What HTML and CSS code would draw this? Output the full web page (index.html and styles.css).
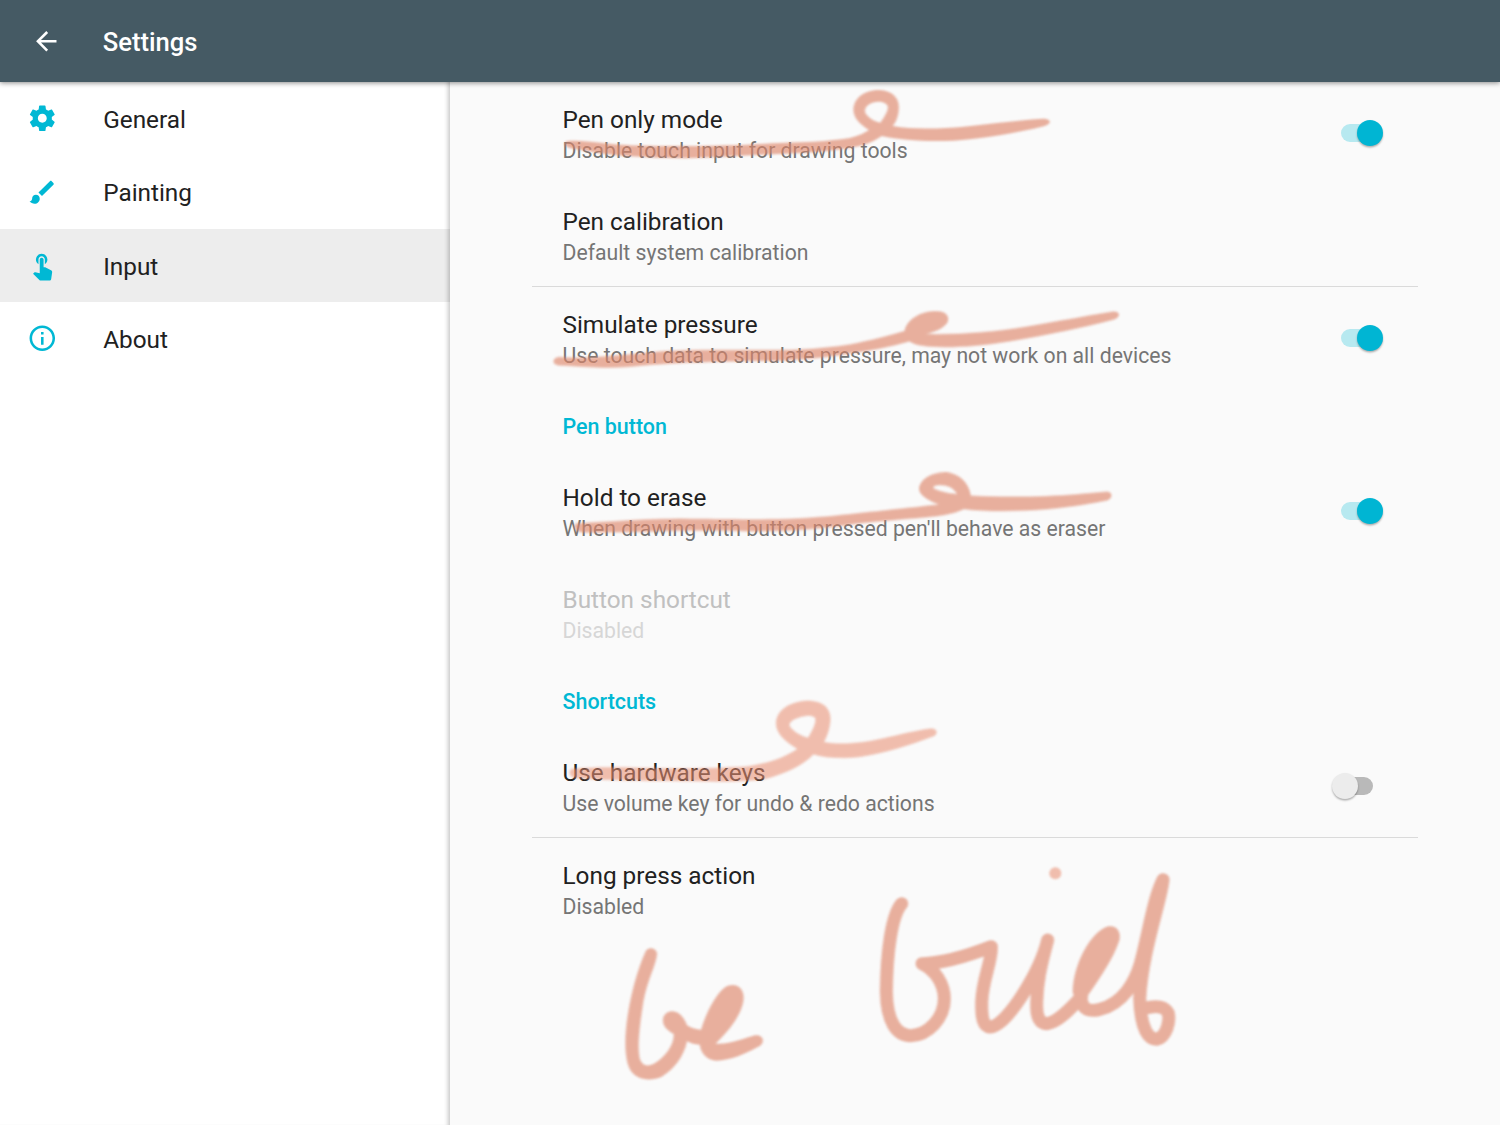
FILE: index.html
```html
<!DOCTYPE html>
<html lang="en">
<head>
<meta charset="utf-8">
<title>Settings</title>
<link rel="stylesheet" href="styles.css">
</head>
<body>
<div class="app">
  <header class="toolbar">
    <svg class="icon" viewBox="0 0 24 24"><path d="M20 11H7.83l5.59-5.59L12 4l-8 8 8 8 1.41-1.41L7.83 13H20v-2z"/></svg>
    <h1 class="toolbar-title">Settings</h1>
  </header>
  <div class="panes">
    <nav class="sidebar">
      <a class="nav-item">
        <svg class="icon" viewBox="0 0 24 24"><path d="M19.43 12.98c.04-.32.07-.64.07-.98s-.03-.66-.07-.98l2.11-1.65c.19-.15.24-.42.12-.64l-2-3.46c-.12-.22-.39-.3-.61-.22l-2.49 1c-.52-.4-1.08-.73-1.69-.98l-.38-2.65C14.46 2.18 14.25 2 14 2h-4c-.25 0-.46.18-.49.42l-.38 2.65c-.61.25-1.17.59-1.69.98l-2.49-1c-.23-.09-.49 0-.61.22l-2 3.46c-.13.22-.07.49.12.64l2.11 1.65c-.04.32-.07.65-.07.98s.03.66.07.98l-2.11 1.65c-.19.15-.24.42-.12.64l2 3.46c.12.22.39.3.61.22l2.49-1c.52.4 1.08.73 1.69.98l.38 2.65c.03.24.24.42.49.42h4c.25 0 .46-.18.49-.42l.38-2.65c.61-.25 1.17-.59 1.69-.98l2.49 1c.23.09.49 0 .61-.22l2-3.46c.12-.22.07-.49-.12-.64l-2.11-1.65zM12 15.5c-1.93 0-3.5-1.57-3.5-3.5s1.57-3.5 3.5-3.5 3.5 1.57 3.5 3.5-1.57 3.5-3.5 3.5z"/></svg>
        <span>General</span>
      </a>
      <a class="nav-item">
        <svg class="icon" viewBox="0 0 24 24"><path d="M7 14c-1.66 0-3 1.34-3 3 0 1.31-1.16 2-2 2 .92 1.22 2.49 2 4 2 2.21 0 4-1.79 4-4 0-1.66-1.34-3-3-3zm13.71-9.37l-1.34-1.34c-.39-.39-1.02-.39-1.41 0L9 12.25 11.75 15l8.96-8.96c.39-.39.39-1.02 0-1.41z"/></svg>
        <span>Painting</span>
      </a>
      <a class="nav-item nav-item-active">
        <svg class="icon" viewBox="0 0 24 24"><path d="M9 11.24V7.5C9 6.12 10.12 5 11.5 5S14 6.12 14 7.5v3.74c1.21-.81 2-2.18 2-3.74C16 5.01 13.99 3 11.5 3S7 5.01 7 7.5c0 1.56.79 2.93 2 3.74zm9.84 4.63l-4.54-2.26c-.17-.07-.35-.11-.54-.11H13v-6c0-.83-.67-1.5-1.5-1.5S10 6.67 10 7.5v10.74l-3.43-.72c-.08-.01-.15-.03-.24-.03-.31 0-.59.13-.79.33l-.79.8 4.94 4.94c.27.27.65.44 1.06.44h6.79c.75 0 1.33-.55 1.44-1.28l.75-5.27c.01-.07.02-.13.02-.2 0-.62-.38-1.16-.91-1.38z"/></svg>
        <span>Input</span>
      </a>
      <a class="nav-item">
        <svg class="icon" viewBox="0 0 24 24"><path d="M11 17h2v-6h-2v6zm1-15C6.48 2 2 6.48 2 12s4.48 10 10 10 10-4.48 10-10S17.52 2 12 2zm0 18c-4.41 0-8-3.59-8-8s3.59-8 8-8 8 3.59 8 8-3.59 8-8 8zM11 9h2V7h-2v2z"/></svg>
        <span>About</span>
      </a>
    </nav>
    <main class="content">
      <div class="pref">
        <div class="pref-text">
          <div class="pref-title">Pen only mode</div>
          <div class="pref-summary">Disable touch input for drawing tools</div>
        </div>
        <div class="switch switch-on"><span class="thumb"></span></div>
      </div>
      <div class="pref">
        <div class="pref-text">
          <div class="pref-title">Pen calibration</div>
          <div class="pref-summary">Default system calibration</div>
        </div>
      </div>
      <div class="pref divided">
        <div class="pref-text">
          <div class="pref-title">Simulate pressure</div>
          <div class="pref-summary">Use touch data to simulate pressure, may not work on all devices</div>
        </div>
        <div class="switch switch-on"><span class="thumb"></span></div>
      </div>
      <h2 class="category">Pen button</h2>
      <div class="pref">
        <div class="pref-text">
          <div class="pref-title">Hold to erase</div>
          <div class="pref-summary">When drawing with button pressed pen'll behave as eraser</div>
        </div>
        <div class="switch switch-on"><span class="thumb"></span></div>
      </div>
      <div class="pref pref-disabled">
        <div class="pref-text">
          <div class="pref-title">Button shortcut</div>
          <div class="pref-summary">Disabled</div>
        </div>
      </div>
      <h2 class="category">Shortcuts</h2>
      <div class="pref">
        <div class="pref-text">
          <div class="pref-title">Use hardware keys</div>
          <div class="pref-summary">Use volume key for undo &amp; redo actions</div>
        </div>
        <div class="switch"><span class="thumb"></span></div>
      </div>
      <div class="pref divided">
        <div class="pref-text">
          <div class="pref-title">Long press action</div>
          <div class="pref-summary">Disabled</div>
        </div>
      </div>
    </main>
  </div>
  <!-- Freehand brush marks over the page -->
  <svg class="ink" viewBox="0 0 1500 1125">
    <g class="brush">
      <path transform="translate(540 80) scale(.3444 .3333)" d="M80 183C110 180 140 184 174 188C230 195 280 197 319 197C370 199 416 198 450 198C500 197 550 196 590 195C650 191 700 189 755 187C810 185 860 180 900 174C925 167 940 160 955 150C925 130 908 110 910 85C914 50 945 30 985 30C1025 32 1043 55 1042 85C1040 110 1035 125 1024 138C1090 150 1170 145 1230 140C1320 130 1400 120 1460 116C1486 116 1486 132 1465 138C1380 160 1290 175 1200 182C1120 186 1050 180 992 168C965 187 940 197 900 204C850 212 800 217 755 219C700 222 650 224 610 226C560 229 510 232 465 233C410 236 360 235 319 232C260 230 215 226 174 220C140 214 110 208 90 205C70 200 66 188 80 183ZM988 128C1000 110 1010 95 1010 80C1006 66 985 62 965 68C945 75 938 92 948 104C958 116 970 124 988 128Z"/>
      <path transform="translate(540 300) scale(.4082 .3333)" d="M45 171C80 174 110 173 147 170C190 167 230 160 269 157C310 152 350 151 392 150C430 149 480 150 514 150C560 150 600 150 637 148C680 145 720 140 759 133C810 122 855 107 893 93C898 60 930 36 965 33C995 30 1005 50 998 68C988 85 970 95 945 102C1030 104 1110 96 1190 80C1270 64 1340 46 1405 34C1423 35 1423 52 1405 59C1320 86 1240 106 1150 124C1080 138 1010 144 960 140C930 138 915 132 905 124C860 140 810 152 759 160C720 168 680 175 637 178C590 183 550 183 514 183C470 185 430 186 392 187C350 188 310 191 269 195C230 200 190 204 155 203C120 202 80 197 45 196C28 192 30 175 45 171Z"/>
      <path transform="translate(540 465) scale(.3827 .3333)" d="M95 175C130 172 170 170 200 168C280 163 330 161 374 161C480 163 549 163 620 162C700 160 750 154 810 147C900 136 1000 124 1042 118C1000 100 985 80 992 62C1000 35 1030 22 1062 22C1095 26 1120 50 1126 92C1230 98 1330 94 1400 88L1482 80C1498 82 1496 100 1483 106C1400 126 1310 138 1210 138C1170 138 1135 136 1108 132C1080 148 1040 154 980 160C900 167 850 173 810 179C720 195 620 200 549 199C480 197 430 196 374 197C300 199 220 203 120 203C95 204 82 186 95 175ZM1090 87C1080 68 1065 60 1045 60C1030 60 1024 66 1030 71C1045 80 1068 85 1090 87Z"/>
      <path transform="translate(600 930) scale(.3333)" d="M136 66C142 48 172 52 171 74C166 110 142 150 130 215C120 280 112 340 118 380C124 412 150 414 178 390C205 368 222 340 221 312C200 300 184 285 190 262C200 238 232 238 248 262C254 270 258 278 261 286C275 296 290 298 303 299C318 250 345 195 375 172C400 156 432 168 431 205C428 250 390 300 347 341C390 344 430 325 465 316C492 312 498 342 472 352C440 370 390 392 350 392C320 390 303 370 299 344C285 344 272 340 261 334C252 380 220 420 185 440C150 456 105 450 88 415C72 380 74 310 84 250C96 180 112 120 136 66Z"/>
      <g transform="translate(860 855) scale(.3333)">
        <path class="line" d="M125 146C95 180 80 290 79 410C80 500 110 542 152 542C205 540 253 490 253 430C252 385 225 345 186 326C250 325 330 300 394 275C396 320 368 370 365 440C364 490 370 515 390 516C440 515 540 350 563 255C540 340 532 380 530 440C528 490 540 506 562 506C600 500 640 450 665 425"/>
        <path d="M638 410C640 330 690 230 745 214C780 210 785 245 775 265C760 310 720 370 682 424L650 460Z"/>
        <path class="line" d="M662 420C665 470 690 470 720 463C790 445 825 380 840 330C865 240 880 130 909 74C905 130 846 290 839 430C842 510 860 553 890 553C920 545 930 500 925 475C915 455 890 450 855 460"/>
      </g>
    </g>
    <g class="brush brush-light">
      <path transform="translate(540 685) scale(.3333)" d="M95 252C150 246 220 246 290 248C400 252 520 250 620 244C680 236 730 220 772 192C735 170 705 145 708 110C714 70 755 47 810 47C855 50 875 75 871 110C868 135 862 152 852 171C910 182 980 172 1050 155C1100 143 1140 134 1175 130C1195 132 1195 150 1175 156C1110 180 1040 204 960 216C900 222 855 218 820 208C790 240 740 265 670 283C600 292 500 290 400 288C300 288 180 284 110 280C85 276 85 258 95 252ZM804 158C818 135 828 115 826 100C820 88 795 90 770 100C748 108 742 120 756 132C770 146 786 154 804 158Z"/>
      <circle cx="1055.3" cy="873.2" r="6"/>
    </g>
  </svg>
</div>
</body>
</html>
```
FILE: styles.css
```css
* { box-sizing: border-box; }

body {
  margin: 0;
  font-family: Roboto, "Noto Sans", sans-serif;
  font-size: 24.33px;
  color: #212121;
  background: #fafafa;
}

.app {
  position: relative;
  display: flex;
  flex-direction: column;
  width: 1500px;
  height: 1125px;
  overflow: hidden;
}

.icon {
  width: 30.6px;
  height: 30.6px;
  flex: none;
  fill: currentColor;
}

.toolbar {
  z-index: 2;
  display: flex;
  align-items: center;
  gap: 41.4px;
  height: 82px;
  flex: none;
  padding-left: 30.8px;
  color: #fff;
  background: #455a64;
  box-shadow: 0 1px 5px rgba(0, 0, 0, .45);
}

.toolbar-title {
  margin: 1px 0 0;
  font-size: 25.6px;
  font-weight: 500;
}

.panes {
  display: flex;
  flex: 1;
  min-height: 0;
}

.sidebar {
  width: 450px;
  flex: none;
  background: #fff;
  box-shadow: inset -5px 0 4px -3px rgba(0, 0, 0, .22);
}

.nav-item {
  display: flex;
  align-items: center;
  gap: 46px;
  height: 73.35px;
  padding-left: 26.6px;
}

.nav-item .icon { color: #00b8d4; }

.nav-item span { padding-top: 1.5px; }

.nav-item-active {
  background: rgba(0, 0, 0, .07);
}

.content {
  flex: 1;
  padding: 0 82px;
}

.pref {
  display: flex;
  justify-content: space-between;
  align-items: center;
  height: 102px;
  padding: 0 35px 0 30.5px;
}

.divided {
  height: 103px;
  border-top: 1.5px solid #dadada;
}

.pref-text { padding-top: 5px; }

.pref-title { line-height: 30px; }

.pref-summary {
  font-size: 21.2px;
  line-height: 31px;
  color: #757575;
}

.pref-disabled .pref-title { color: #c0c0c0; }
.pref-disabled .pref-summary { color: #d6d6d6; }

.category {
  margin: 0;
  height: 71px;
  padding: 2px 0 0 30.5px;
  font-size: 21.45px;
  font-weight: 500;
  line-height: 71px;
  color: #00b8d4;
}

.switch {
  position: relative;
  display: flex;
  align-items: center;
  width: 51px;
  height: 26px;
}

.switch::before {
  content: "";
  position: absolute;
  left: 9px;
  top: 4px;
  width: 32px;
  height: 18px;
  border-radius: 9px;
  background: #b9b9b9;
}

.thumb {
  z-index: 1;
  width: 26px;
  height: 26px;
  border-radius: 50%;
  background: #ececec;
  box-shadow: 0 1.5px 2px rgba(0, 0, 0, .3);
}

.switch-on { justify-content: flex-end; }
.switch-on::before { background: #b7e9f0; }
.switch-on .thumb { background: #00b5d3; }

.ink {
  position: absolute;
  inset: 0;
  z-index: 3;
  pointer-events: none;
}

.brush {
  fill: #de866a;
  fill-rule: evenodd;
  opacity: .64;
  filter: blur(.9px);
}

.brush-light {
  fill: #e99175;
  opacity: .58;
}

.line {
  fill: none;
  stroke: #de866a;
  stroke-width: 39;
  stroke-linecap: round;
  stroke-linejoin: round;
}
```
